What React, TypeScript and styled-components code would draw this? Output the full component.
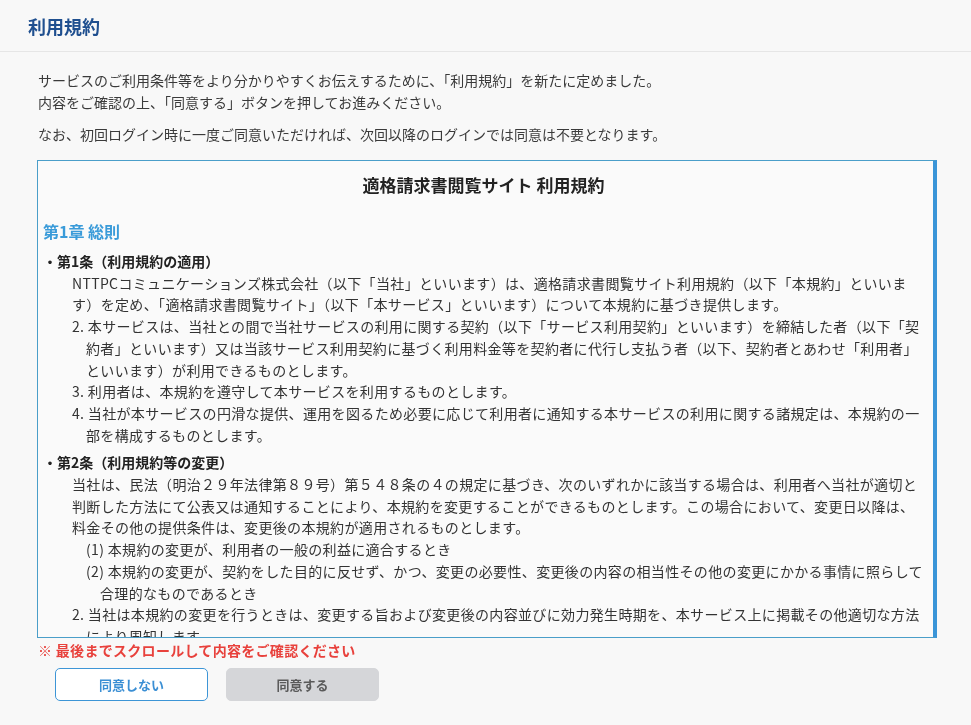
import React from 'react'
import styled, { createGlobalStyle } from 'styled-components'

const GlobalStyle = createGlobalStyle`
  html, body {
    margin: 0;
    padding: 0;
    background: #f8f8f8;
  }
  body {
    font-family: "Noto Sans CJK JP", "Noto Sans", sans-serif;
    color: #333;
  }
`

interface IItem {
  label?: string
  text: string
  sub?: boolean
}

interface IArticle {
  title: string
  body: string
  items: IItem[]
}

const articles: IArticle[] = [
  {
    title: '・第1条（利用規約の適用）',
    body: 'NTTPCコミュニケーションズ株式会社（以下「当社」といいます）は、適格請求書閲覧サイト利用規約（以下「本規約」といいます）を定め、「適格請求書閲覧サイト」（以下「本サービス」といいます）について本規約に基づき提供します。',
    items: [
      { label: '2.', text: '本サービスは、当社との間で当社サービスの利用に関する契約（以下「サービス利用契約」といいます）を締結した者（以下「契約者」といいます）又は当該サービス利用契約に基づく利用料金等を契約者に代行し支払う者（以下、契約者とあわせ「利用者」といいます）が利用できるものとします。' },
      { label: '3.', text: '利用者は、本規約を遵守して本サービスを利用するものとします。' },
      { label: '4.', text: '当社が本サービスの円滑な提供、運用を図るため必要に応じて利用者に通知する本サービスの利用に関する諸規定は、本規約の一部を構成するものとします。' },
    ],
  },
  {
    title: '・第2条（利用規約等の変更）',
    body: '当社は、民法（明治２９年法律第８９号）第５４８条の４の規定に基づき、次のいずれかに該当する場合は、利用者へ当社が適切と判断した方法にて公表又は通知することにより、本規約を変更することができるものとします。この場合において、変更日以降は、料金その他の提供条件は、変更後の本規約が適用されるものとします。',
    items: [
      { label: '(1)', text: '本規約の変更が、利用者の一般の利益に適合するとき', sub: true },
      { label: '(2)', text: '本規約の変更が、契約をした目的に反せず、かつ、変更の必要性、変更後の内容の相当性その他の変更にかかる事情に照らして合理的なものであるとき', sub: true },
      { label: '2.', text: '当社は本規約の変更を行うときは、変更する旨および変更後の内容並びに効力発生時期を、本サービス上に掲載その他適切な方法により周知します。' },
    ],
  },
  {
    title: '・第3条（利用者IDおよびパスワード）',
    body: '利用者は、当社が発行する利用者IDおよびパスワードを、自己の責任において管理するものとします。',
    items: [
      { label: '2.', text: '利用者は、利用者IDおよびパスワードを第三者に開示、貸与、譲渡してはならないものとします。' },
      { label: '3.', text: '利用者IDおよびパスワードの管理不十分、使用上の過誤、第三者の使用等による損害の責任は利用者が負うものとします。' },
    ],
  },
]

const Header = styled.header`
  height: 52px;
  box-sizing: border-box;
  border-bottom: 1px solid #e6e6e6;
  display: flex;
  align-items: center;
  padding-left: 28px;
`

const PageTitle = styled.h1`
  margin: 0;
  font-size: 18px;
  font-weight: 700;
  color: #1f4f8f;
  line-height: 1;
`

const Main = styled.main`
  padding: 17px 0 20px 37px;
`

const Intro = styled.p`
  margin: 0 0 10px 1px;
  font-size: 14px;
  line-height: 22px;
  color: #3a3a3a;
`

const TermsBox = styled.div`
  margin-top: 15px;
  width: 900px;
  height: 478px;
  box-sizing: border-box;
  border: 1px solid #4a9ec9;
  border-right: 4px solid #3a95d8;
  background: #fafafa;
  padding: 12px 9px 0 5px;
  overflow-y: auto;
  scrollbar-width: none;
  &::-webkit-scrollbar {
    display: none;
  }
`

const TermsTitle = styled.h2`
  margin: 0 0 22px;
  text-align: center;
  font-size: 17px;
  line-height: 24px;
  font-weight: 700;
  color: #222;
`

const Chapter = styled.h3`
  margin: 0 0 8px;
  font-size: 16px;
  line-height: 24px;
  font-weight: 700;
  color: #3a9bd9;
`

const Article = styled.section`
  margin-bottom: 6px;
  font-size: 14px;
  line-height: 21.7px;
  letter-spacing: 0.34px;
  color: #333;
`

const ArticleTitle = styled.h4`
  margin: 0;
  font-size: 14px;
  font-weight: 700;
  line-height: 21.7px;
  letter-spacing: 0;
  color: #222;
`

const ArticleBody = styled.p`
  margin: 0;
  padding-left: 29px;
`

const Item = styled.p<{ sub?: boolean }>`
  margin: 0;
  padding-left: ${p => (p.sub ? '57px' : '43px')};
  text-indent: -14px;
`

const Notice = styled.p`
  margin: 2px 0 0 1px;
  font-size: 14px;
  line-height: 20px;
  font-weight: 700;
  letter-spacing: 0.3px;
  color: #e8413c;
`

const Buttons = styled.div`
  display: flex;
  gap: 18px;
  margin: 8px 0 0 18px;
`

const Button = styled.button<{ primary?: boolean }>`
  width: 153px;
  height: 33px;
  border-radius: 5px;
  font-family: inherit;
  font-size: 13px;
  font-weight: 700;
  cursor: pointer;
  border: 1px solid ${p => (p.primary ? '#d5d6d9' : '#3d95d6')};
  background: ${p => (p.primary ? '#d5d6d9' : '#fff')};
  color: ${p => (p.primary ? '#5a5a5a' : '#3b8fd4')};
  &:disabled {
    cursor: default;
  }
`

const App = () => {
  return (
    <>
      <GlobalStyle />
      <Header>
        <PageTitle>利用規約</PageTitle>
      </Header>
      <Main>
        <Intro>
          サービスのご利用条件等をより分かりやすくお伝えするために、「利用規約」を新たに定めました。<br />
          内容をご確認の上、「同意する」ボタンを押してお進みください。
        </Intro>
        <Intro>なお、初回ログイン時に一度ご同意いただければ、次回以降のログインでは同意は不要となります。</Intro>
        <TermsBox>
          <TermsTitle>適格請求書閲覧サイト 利用規約</TermsTitle>
          <Chapter>第1章 総則</Chapter>
          {articles.map(a => (
            <Article key={a.title}>
              <ArticleTitle>{a.title}</ArticleTitle>
              <ArticleBody>{a.body}</ArticleBody>
              {a.items.map(it => (
                <Item key={it.label + it.text} sub={it.sub}>
                  {it.label} {it.text}
                </Item>
              ))}
            </Article>
          ))}
        </TermsBox>
        <Notice>※ 最後までスクロールして内容をご確認ください</Notice>
        <Buttons>
          <Button>同意しない</Button>
          <Button primary disabled>同意する</Button>
        </Buttons>
      </Main>
    </>
  )
}

export default App
